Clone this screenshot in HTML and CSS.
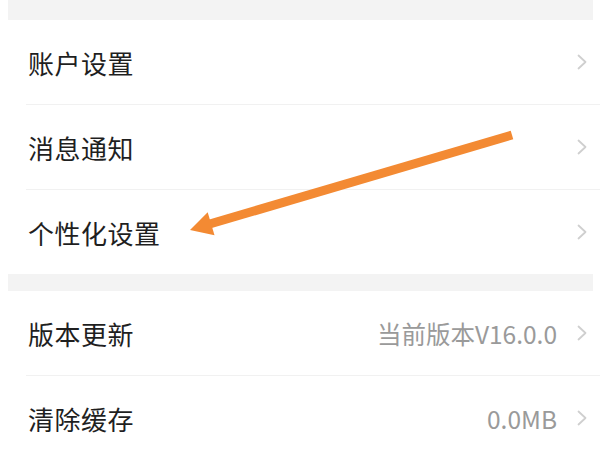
FILE: index.html
```html
<!DOCTYPE html>
<html lang="zh-CN">
<head>
<meta charset="utf-8">
<link rel="stylesheet" href="styles.css">
</head>
<body>
<div class="page">
  <div class="band band-top"></div>
  <div class="group">
    <div class="row"><span class="label">账户设置</span><span class="right"><svg class="chev" viewBox="0 0 10 16"><path d="M1.5 1.5 L8.5 8 L1.5 14.5"/></svg></span></div>
    <div class="row"><span class="label">消息通知</span><span class="right"><svg class="chev" viewBox="0 0 10 16"><path d="M1.5 1.5 L8.5 8 L1.5 14.5"/></svg></span></div>
    <div class="row"><span class="label">个性化设置</span><span class="right"><svg class="chev" viewBox="0 0 10 16"><path d="M1.5 1.5 L8.5 8 L1.5 14.5"/></svg></span></div>
  </div>
  <div class="band band-mid"></div>
  <div class="group">
    <div class="row"><span class="label">版本更新</span><span class="right"><span class="value">当前版本V16.0.0</span><svg class="chev" viewBox="0 0 10 16"><path d="M1.5 1.5 L8.5 8 L1.5 14.5"/></svg></span></div>
    <div class="row"><span class="label">清除缓存</span><span class="right"><span class="value">0.0MB</span><svg class="chev" viewBox="0 0 10 16"><path d="M1.5 1.5 L8.5 8 L1.5 14.5"/></svg></span></div>
  </div>
  <svg class="arrow" viewBox="0 0 600 459" width="600" height="459">
    <line x1="512" y1="135" x2="208" y2="224.5" stroke="#f38a33" stroke-width="9" stroke-linecap="butt"/>
    <polygon points="190,230 207.7,212.3 214.5,235.3" fill="#f38a33"/>
  </svg>
</div>
</body>
</html>
```
FILE: styles.css
```css
html, body {
  margin: 0;
  padding: 0;
  background: #ffffff;
}
.page {
  position: relative;
  width: 600px;
  height: 459px;
  overflow: hidden;
  background: #ffffff;
  font-family: "Noto Sans CJK SC", "Noto Sans", sans-serif;
}
.band {
  background: #f3f3f3;
  margin: 0 7px 0 8px;
}
.band-top {
  height: 20px;
}
.band-mid {
  height: 17px;
}
.group {
  display: flex;
  flex-direction: column;
}
.row {
  height: 84px;
  display: flex;
  align-items: center;
  justify-content: space-between;
  margin-left: 26px;
  padding-left: 2px;
  padding-right: 13px;
  border-bottom: 1px solid #f1f1f1;
}
.row:last-child {
  border-bottom: none;
}
.label {
  font-size: 26px;
  color: #1f1f1f;
  font-weight: 400;
  letter-spacing: 0.5px;
}
.right {
  display: flex;
  align-items: center;
  gap: 20px;
}
.value {
  font-size: 24.5px;
  color: #9a9a9a;
  font-family: "Noto Sans CJK SC", "Noto Sans", sans-serif;
}
.chev {
  width: 10px;
  height: 16px;
  fill: none;
  stroke: #cfcfcf;
  stroke-width: 1.8;
  stroke-linecap: round;
  stroke-linejoin: round;
}
.arrow {
  position: absolute;
  left: 0;
  top: 0;
  pointer-events: none;
}
```
